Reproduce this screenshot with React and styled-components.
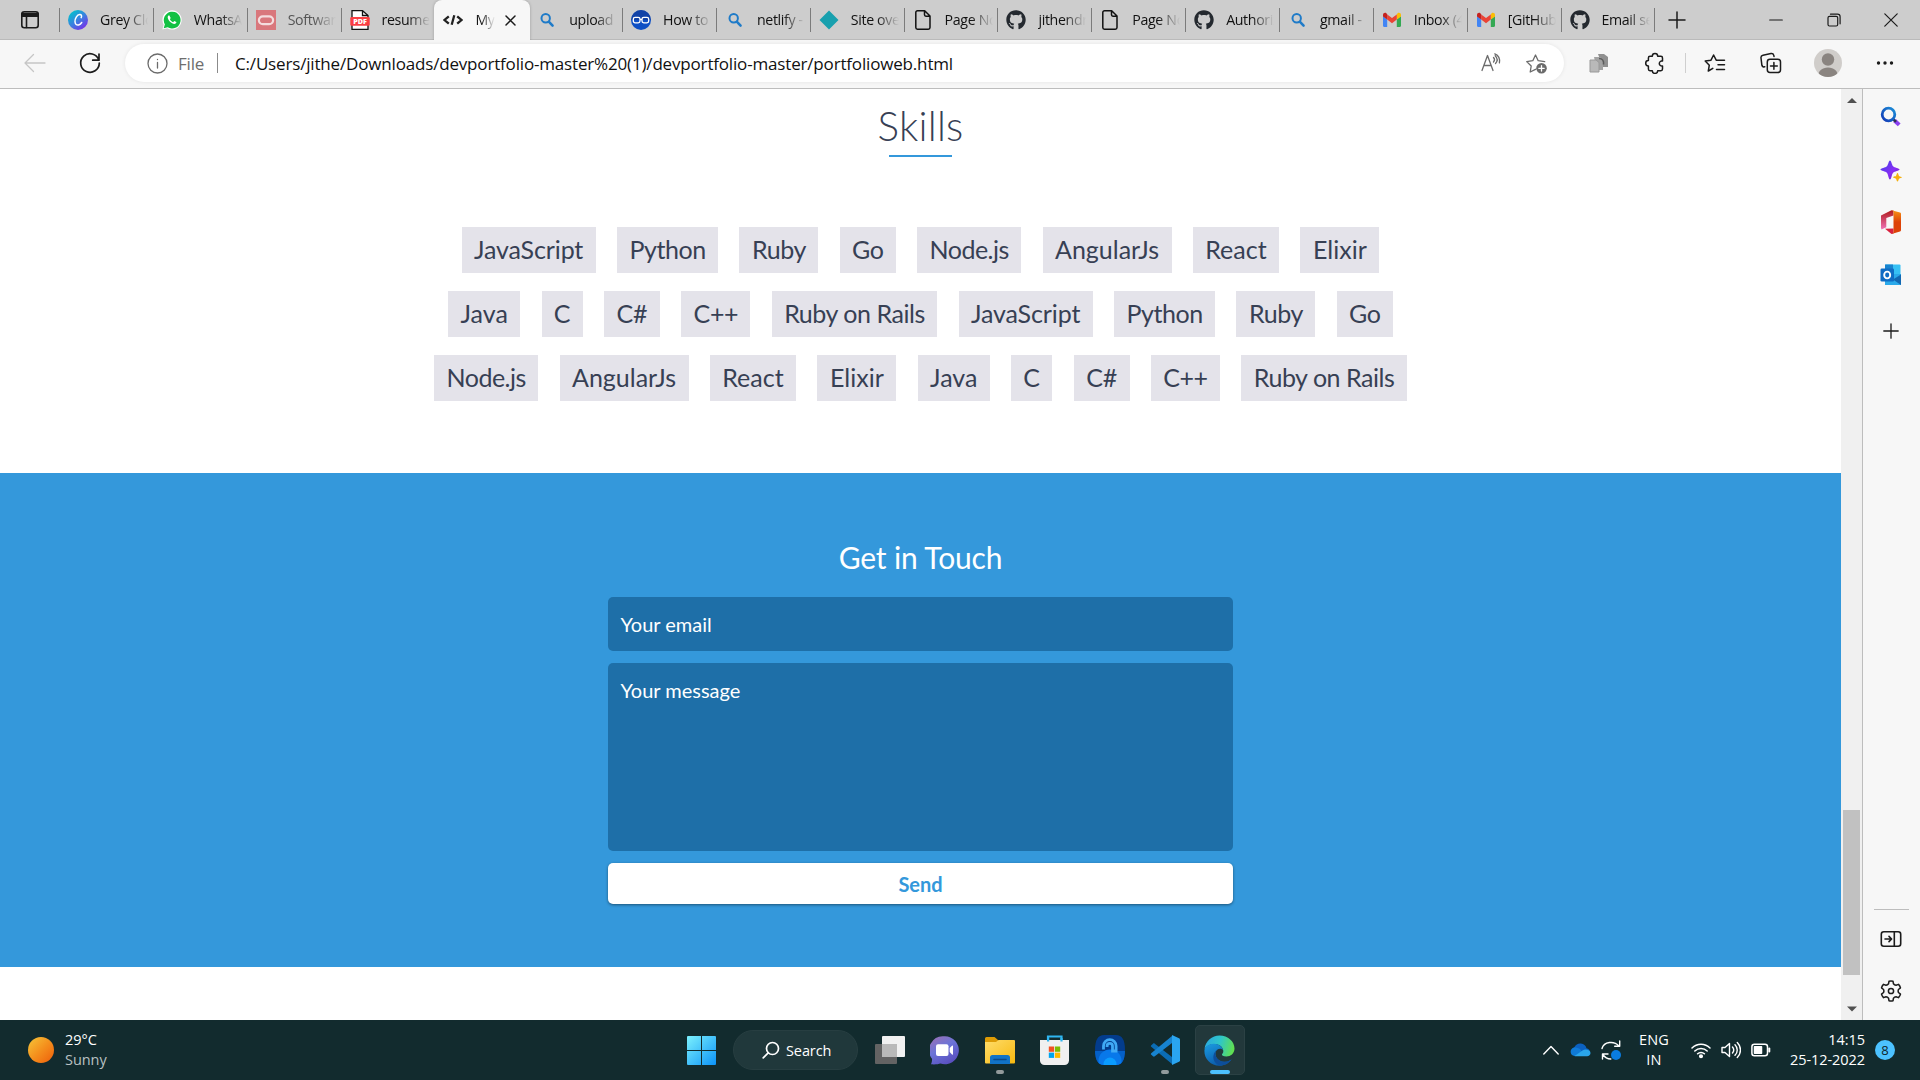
import React from 'react';
import styled, { createGlobalStyle, css } from 'styled-components';
import { FaGithub } from 'react-icons/fa';

const Global = createGlobalStyle`
  * { box-sizing: border-box; }
  body { margin: 0; background: #fff; overflow: hidden; }
  svg { display: block; flex: none; }
`;

const ui = `"Open Sans", "Noto Sans", sans-serif`;

const Screen = styled.div`
  width: 1920px;
  height: 1080px;
  display: flex;
  flex-direction: column;
  overflow: hidden;
  font-family: ${ui};
`;

/* ---------- tab strip ---------- */
const TabStrip = styled.div`
  height: 40px;
  flex: none;
  display: flex;
  background: #cdcdcd;
  box-shadow: inset 0 -1px 0 #bababa;
`;
const Workspace = styled.div`
  width: 59px;
  flex: none;
  padding: 10px 0 0 20px;
`;
const Tab = styled.div`
  width: 93.85px;
  flex: none;
  height: 40px;
  display: flex;
  align-items: center;
  padding-left: 9px;
  position: relative;
  &::before {
    content: '';
    position: absolute;
    left: 0;
    top: 8px;
    width: 1px;
    height: 24px;
    background: ${(p) => (p.$noLine ? 'transparent' : '#7b7b7b')};
  }
  ${(p) =>
    p.$active &&
    css`
      background: #f7f7f7;
      border-radius: 8px 8px 0 0;
      box-shadow: 0 0 3px rgba(0, 0, 0, 0.25);
      clip-path: inset(-4px -4px 0 -4px);
      width: 95.5px;
      margin-right: -1.65px;
    `}
`;
const TabIcon = styled.span`
  width: 20px;
  height: 20px;
  flex: none;
  display: flex;
  align-items: center;
  justify-content: center;
`;
const TabTitle = styled.span`
  margin-left: 12px;
  width: ${(p) => (p.$active ? 20 : 48)}px;
  overflow: hidden;
  white-space: nowrap;
  font-size: 14.2px;
  line-height: 20px;
  letter-spacing: -0.35px;
  color: ${(p) => (p.$dim ? '#555' : '#111')};
  mask-image: linear-gradient(90deg, #000 calc(100% - ${(p) => (p.$active ? 14 : 22)}px), transparent);
`;
const CloseTab = styled.span`
  margin-left: 10px;
`;
const NewTab = styled.div`
  width: 45px;
  display: flex;
  align-items: center;
  justify-content: center;
  border-left: 1px solid transparent;
  position: relative;
  &::before {
    content: '';
    position: absolute;
    left: -1px;
    top: 8px;
    width: 1px;
    height: 24px;
    background: #7b7b7b;
  }
`;
const WindowButtons = styled.div`
  margin-left: auto;
  display: flex;
`;
const WinButton = styled.div`
  width: 57.5px;
  display: flex;
  align-items: center;
  justify-content: center;
`;

/* ---------- toolbar ---------- */
const Toolbar = styled.div`
  height: 49px;
  flex: none;
  display: flex;
  align-items: center;
  background: #f7f7f7;
  padding: 0 0 2px 22px;
  border-bottom: 1px solid #bdbdbd;
`;
const NavButtons = styled.div`
  width: 103px;
  flex: none;
  display: flex;
  gap: 29px;
`;
const Address = styled.div`
  width: 1439px;
  flex: none;
  height: 38px;
  border-radius: 19px;
  background: #fff;
  box-shadow: 0 0 4px rgba(0, 0, 0, 0.08);
  display: flex;
  align-items: center;
  padding: 0 17px 0 22px;
  font-size: 17px;
  white-space: nowrap;
`;
const Scheme = styled.span`
  margin-left: 10px;
  width: 29px;
  color: #6e6e6e;
  letter-spacing: -0.2px;
`;
const SchemeLine = styled.span`
  width: 1px;
  height: 20px;
  background: #8b8b8b;
  margin: 0 17px 0 10px;
`;
const Url = styled.span`
  color: #111;
  letter-spacing: -0.17px;
  flex: 1;
`;
const AddressActions = styled.span`
  display: flex;
  gap: 23px;
`;
const ToolIcons = styled.div`
  flex: 1;
  display: flex;
  align-items: center;
  padding-left: 21px;
`;
const ToolSlot = styled.span`
  width: ${(p) => p.$w}px;
  flex: none;
  display: flex;
  justify-content: center;
`;
const ToolLine = styled.span`
  width: 1px;
  height: 20px;
  background: #cfcfcf;
`;

/* ---------- main area ---------- */
const Main = styled.div`
  height: 931px;
  flex: none;
  display: flex;
`;
const Page = styled.div`
  width: 1841px;
  flex: none;
  background: #fff;
  font-family: Lato, sans-serif;
  display: flex;
  flex-direction: column;
`;
const Skills = styled.section`
  height: 384px;
  display: flex;
  flex-direction: column;
  align-items: center;
`;
const SkillsTitle = styled.h2`
  margin: 12px 0 0;
  font-size: 40.5px;
  line-height: 50px;
  letter-spacing: 0.25px;
  font-weight: 300;
  color: #374054;
`;
const TitleBar = styled.div`
  width: 63px;
  height: 2px;
  margin-top: 4px;
  background: #3498db;
`;
const ChipRows = styled.div`
  margin-top: 70px;
  display: flex;
  flex-direction: column;
  gap: 17.8px;
`;
const ChipRow = styled.div`
  display: flex;
  justify-content: center;
  gap: 21.4px;
`;
const Chip = styled.span`
  width: ${(p) => p.$w}px;
  height: 46.3px;
  background: #e4e3ea;
  color: #374054;
  font-size: 25px;
  line-height: 45px;
  letter-spacing: ${(p) => p.$ls}px;
  text-align: center;
  white-space: nowrap;
`;
const Contact = styled.section`
  height: 494px;
  background: #3498db;
  display: flex;
  flex-direction: column;
  align-items: center;
  padding-top: 64px;
`;
const ContactTitle = styled.h2`
  margin: 0 0 19px;
  font-size: 30px;
  line-height: 41px;
  letter-spacing: -0.15px;
  font-weight: 400;
  color: #fff;
`;
const Field = styled.div`
  width: 625px;
  height: ${(p) => p.$h}px;
  margin-bottom: 12px;
  padding: 14px 12.5px;
  border-radius: 5px;
  background: #1e6fa8;
  color: #fff;
  font-size: 20px;
  line-height: 27px;
`;
const Send = styled.button`
  width: 625px;
  height: 41px;
  border: 0;
  border-radius: 5px;
  background: #fff;
  box-shadow: 0 1px 3px rgba(0, 0, 0, 0.45);
  color: #3498db;
  font: 700 20px/41px Lato, sans-serif;
  padding: 1px 0 0;
`;
const Scrollbar = styled.div`
  width: 22px;
  flex: none;
  background: #f0f0f0;
  border-right: 1px solid #bdbdbd;
  display: flex;
  flex-direction: column;
  align-items: center;
`;
const Thumb = styled.div`
  width: 17px;
  height: 165px;
  margin: 704px 0 31px;
  background: #c1c1c1;
`;
const Sidebar = styled.div`
  flex: 1;
  background: #f7f7f7;
  display: flex;
  flex-direction: column;
  align-items: center;
  padding-right: 1px;
`;
const SideIcon = styled.div`
  height: ${(p) => p.$h || 53}px;
  flex: none;
  display: flex;
  align-items: center;
  justify-content: center;
`;
const SideLine = styled.div`
  width: 35px;
  height: 1px;
  margin-top: auto;
  background: #bdbdbd;
`;
const SideFooter = styled.div`
  height: 110px;
  padding-top: 2px;
`;

/* ---------- taskbar ---------- */
const Taskbar = styled.div`
  height: 60px;
  display: grid;
  grid-template-columns: 674px 1fr 377px;
  background: #122b2e;
  color: #fff;
`;
const Weather = styled.div`
  display: flex;
  align-items: center;
  padding-left: 28px;
  gap: 11px;
`;
const Sun = styled.span`
  width: 26px;
  height: 26px;
  border-radius: 50%;
  background: linear-gradient(135deg, #f5c136 5%, #f4901d 50%, #ee5d0a);
`;
const Lines = styled.div`
  display: flex;
  flex-direction: column;
  text-align: ${(p) => p.$align || 'left'};
  font-size: 14.5px;
  line-height: 20px;
  letter-spacing: ${(p) => p.$ls || -0.05}px;
  white-space: nowrap;
`;
const Muted = styled.span`
  color: #b9c1c2;
`;
const Apps = styled.div`
  display: flex;
  align-items: center;
`;
const AppSlot = styled.div`
  width: 55px;
  height: 60px;
  display: flex;
  align-items: center;
  justify-content: center;
  position: relative;
  &::after {
    content: '';
    position: absolute;
    bottom: 6px;
    height: 4px;
    border-radius: 2px;
    width: ${(p) => (p.$active ? 20 : p.$open ? 8 : 0)}px;
    background: ${(p) => (p.$active ? '#4cc2ff' : '#929b9c')};
  }
`;
const ActiveTile = styled.div`
  width: 50px;
  height: 50px;
  border-radius: 5px;
  display: flex;
  align-items: center;
  justify-content: center;
  background: #22383b;
  border: 1px solid #2b4144;
`;
const SearchPill = styled.div`
  width: 125px;
  height: 40px;
  margin: 0 4px;
  border-radius: 20px;
  background: #20383b;
  border: 1px solid #273e41;
  display: flex;
  align-items: center;
  padding-left: 28px;
  gap: 6px;
  font-size: 14.5px;
  letter-spacing: -0.1px;
`;
const Tray = styled.div`
  display: flex;
  align-items: center;
  padding-right: 25px;
`;
const TraySlot = styled.span`
  width: ${(p) => p.$w}px;
  flex: none;
  display: flex;
  justify-content: center;
`;
const Clock = styled.div`
  margin-left: auto;
`;
const Badge = styled.span`
  width: 20px;
  height: 20px;
  margin-left: 10px;
  border-radius: 50%;
  background: #4cc2ff;
  color: #10262a;
  font-size: 13px;
  line-height: 21px;
  text-align: center;
`;

/* ---------- icons ---------- */
const Line = ({ s = 20, vb = 20, c = '#1b1b1b', w = 1.3, children }) => (
  <svg width={s} height={s} viewBox={`0 0 ${vb} ${vb}`} fill="none" stroke={c} strokeWidth={w} strokeLinecap="round" strokeLinejoin="round">
    {children}
  </svg>
);

const CanvaIcon = () => (
  <svg width="20" height="20" viewBox="0 0 20 20">
    <defs>
      <linearGradient id="cv" x1="0.1" y1="0.1" x2="0.8" y2="1">
        <stop offset="0" stopColor="#00c4cc" />
        <stop offset="0.5" stopColor="#3b7fe0" />
        <stop offset="1" stopColor="#7d2ae8" />
      </linearGradient>
    </defs>
    <circle cx="10" cy="10" r="10" fill="url(#cv)" />
    <path d="M13.200 7.600c.9-1.800.1-3.200-1.500-3-2.700.3-4.900 3.900-4.700 7.100.2 2.600 1.700 3.800 3.600 3.300 1.400-.4 2.400-1.300 3.100-2.500" fill="none" stroke="#fff" strokeWidth="1.500" strokeLinecap="round" />
  </svg>
);
const WhatsIcon = () => (
  <svg width="20" height="20" viewBox="0 0 20 20">
    <path d="M.4 19.600 1.700 14.700A9.600 9.600 0 1 1 5.300 18.300Z" fill="#fff" />
    <path d="M1.700 18.300 2.900 14.300A8.400 8.400 0 1 1 5.700 17.200Z" fill="#12c143" />
    <path d="M7.200 5.300c-.5-.1-1.500.8-1.500 2 0 2.900 4 6.700 6.600 6.700 1.300 0 2.200-1 2.100-1.900l-2.200-1.100-1 1.200c-1.500-.5-2.700-1.700-3.300-3l.8-1.200z" fill="#fff" />
  </svg>
);
const OracleIcon = () => (
  <svg width="20" height="20" viewBox="0 0 20 20">
    <path fill="#d9777c" d="M0 0h20v20H0z" />
    <rect x="2.900" y="6.300" width="14.200" height="7.800" rx="3.900" fill="none" stroke="#f4dcdd" strokeWidth="2.200" />
  </svg>
);
const PdfIcon = () => (
  <svg width="20" height="20" viewBox="0 0 20 20">
    <path d="M2 .7h10.500L18 5.500v13.800H2z" fill="#fff" stroke="#111" strokeWidth="1.300" />
    <path d="M12.500.7v4.800H18" fill="none" stroke="#111" strokeWidth="1.300" />
    <rect x=".3" y="7" width="19.400" height="8.800" rx="1.200" fill="#fa3e42" />
    <text x="10" y="14" textAnchor="middle" fontFamily="Open Sans" fontWeight="800" fontSize="7.200" fill="#fff">PDF</text>
  </svg>
);
const CodeIcon = () => (
  <svg width="20" height="20" viewBox="0 0 20 20" fill="none" stroke="#222" strokeWidth="2.300">
    <path d="M5.800 6.300 1.500 10l4.300 3.700M14.200 6.300 18.500 10l-4.300 3.700M11.300 5.300 8.700 14.700" />
  </svg>
);
const BingSearch = () => (
  <svg width="20" height="20" viewBox="0 0 20 20" fill="none" stroke="#1f7bc8" strokeLinecap="round">
    <circle cx="8.700" cy="8.300" r="4.200" strokeWidth="2" />
    <path d="m12 11.800 3.600 3.900" strokeWidth="2.500" />
  </svg>
);
const HowIcon = () => (
  <svg width="20" height="20" viewBox="0 0 20 20">
    <circle cx="10" cy="10" r="10" fill="#0d4fc4" />
    <path d="M0 10a10 10 0 0 1 20 0z" fill="#143a94" opacity=".6" />
    <rect x="2.300" y="7.400" width="6.700" height="5.400" rx="1.800" fill="none" stroke="#fff" strokeWidth="1.300" />
    <rect x="11" y="7.400" width="6.700" height="5.400" rx="1.800" fill="none" stroke="#fff" strokeWidth="1.300" />
    <path d="M9 9.300h2" stroke="#fff" strokeWidth="1.300" />
  </svg>
);
const NetlifyIcon = () => (
  <svg width="20" height="20" viewBox="0 0 20 20">
    <path d="m10 .5 9.500 9.500-9.500 9.500L.5 10z" fill="#18a0ae" />
  </svg>
);
const PageIcon = () => (
  <Line c="#111" w={1.5}>
    <path d="M4.500.8h7.200L17 6v11.500a1.700 1.700 0 0 1-1.700 1.700H4.500a1.700 1.700 0 0 1-1.700-1.700v-15A1.700 1.700 0 0 1 4.500.8zM11.500 1v3.800c0 .8.600 1.400 1.400 1.400H17" />
  </Line>
);
const GmailIcon = () => (
  <svg width="20" height="20" viewBox="0 0 20 20">
    <path d="M1 6v9.700c0 .7.500 1.200 1.200 1.200h3V9.500z" fill="#4285f4" />
    <path d="M14.800 9.500v7.400h3c.7 0 1.200-.5 1.200-1.200V6z" fill="#34a853" />
    <path d="M14.800 4.400v5.200L19 6.400V5c0-1.900-2-2.800-3.400-1.700z" fill="#fbbc04" />
    <path d="M5.200 9.600V4.400L10 8l4.800-3.600v5.200L10 13.200z" fill="#ea4335" />
    <path d="M1 5v1.400l4.200 3.200V4.400l-.8-1.100C3 2.200 1 3.100 1 5z" fill="#c5221f" />
  </svg>
);
const GitIcon = () => <FaGithub size={20} color="#24292f" />;

const ReadAloud = () => (
  <Line s={22} vb={22} c="#6b6b6b">
    <path d="m2 18.500 5.500-15 5.500 15M4 13.500h7M13.500 5.500c1.200 1.300 1.200 3.200 0 4.500M15.200 3.700c2.300 2.300 2.300 5.500.3 7.800M14.800 1.800c3.500 1.500 5.400 4.600 4.600 9" />
  </Line>
);
const StarAdd = () => (
  <Line s={22} vb={22} c="#6b6b6b">
    <path d="M10.500 17.300 5.200 20l1-6-4.500-4.400 6.100-.9L10.500 3l2.700 5.700 6.500.9" />
    <circle cx="16.500" cy="16.300" r="5.300" fill="#6b6b6b" stroke="none" />
    <path d="M16.500 13.600V19M13.800 16.300h5.400" stroke="#fff" />
  </Line>
);
const PagesIcon = () => (
  <svg width="20" height="20" viewBox="0 0 20 20">
    <path d="M9 1h6l4 3v10h-5z" fill="#909090" />
    <path d="M5 4h6l3 3v10H8z" fill="#a3a3a3" />
    <path d="M10 5.500c3.500 0 5 2.500 4.500 6" fill="none" stroke="#5c5c5c" strokeWidth="1.500" />
    <path d="M1 7h6l3 2.500V19H1z" fill="#b9b9b9" stroke="#999" />
  </svg>
);
const Puzzle = () => (
  <Line s={22} vb={22} w={1.5}>
    <path d="M8.300 4.300a2.700 2.700 0 0 1 5.400 0h3.200a1.600 1.600 0 0 1 1.600 1.600v3.200a2.500 2.500 0 1 0 0 4.800v3.200a1.600 1.600 0 0 1-1.600 1.600h-3.200a2.700 2.700 0 0 1-5.400 0H6a1.600 1.600 0 0 1-1.600-1.600v-3.200a2.700 2.700 0 0 1 0-5.400V5.900A1.600 1.600 0 0 1 6 4.300z" />
  </Line>
);
const Favorites = () => (
  <Line s={22} vb={22} w={1.5}>
    <path d="M8.800 16.300 4.300 19l1-5.800L1.200 9l5.800-.8L9.600 3l2.600 5.200h8.300M14 12.800h6.500M12.500 17.400h8" />
  </Line>
);
const Collections = () => (
  <Line s={22} vb={22} w={1.5}>
    <rect x="7.300" y="7.300" width="13.200" height="13.200" rx="2.700" />
    <path d="M13.900 10.500v6.800M10.500 13.900h6.800M4.800 14.800 3.500 15a2.400 2.400 0 0 1-1.600-1.700L1 6a2.500 2.500 0 0 1 2-2.800l8-1.600a2.500 2.500 0 0 1 2.800 1.800l.2 1" />
  </Line>
);
const Avatar = () => (
  <svg width="28" height="28" viewBox="0 0 28 28">
    <defs>
      <clipPath id="av"><circle cx="14" cy="14" r="14" /></clipPath>
    </defs>
    <g clipPath="url(#av)">
      <path fill="#d0cdca" d="M0 0h28v28H0z" />
      <circle cx="14" cy="10.500" r="6.200" fill="#8a8480" />
      <path d="M4 28c0-6 4-9.500 10-9.500S24 22 24 28z" fill="#8a8480" />
    </g>
  </svg>
);

const BingSide = () => (
  <svg width="22" height="22" viewBox="0 0 22 22" fill="none">
    <defs>
      <linearGradient id="bs" x1="0" y1="1" x2="1" y2="0">
        <stop offset="0" stopColor="#1238b5" />
        <stop offset="1" stopColor="#1c8fd8" />
      </linearGradient>
    </defs>
    <path d="m14.500 14.500 4.700 4.400" stroke="#8a3ff0" strokeWidth="4" />
    <path d="m13 13 3 2.800" stroke="#2b3050" strokeWidth="2.500" />
    <circle cx="8.500" cy="8.500" r="6.300" stroke="url(#bs)" strokeWidth="2.800" />
  </svg>
);
const Sparkle = () => (
  <svg width="22" height="22" viewBox="0 0 22 22">
    <defs>
      <linearGradient id="sp" x1="0" y1="0" x2="1" y2="1">
        <stop offset="0" stopColor="#3e41e8" />
        <stop offset="0.600" stopColor="#8a2ef5" />
        <stop offset="1" stopColor="#5a1ba8" />
      </linearGradient>
    </defs>
    <path d="M10 .5c1.300 0 1.900 4.500 3.100 5.800s6.400 2 6.400 3.200-5.100 1.900-6.400 3.200S11.300 19.500 10 19.500s-1.900-5.500-3.100-6.800S.5 10.700.5 9.500s5.100-1.900 6.400-3.200S8.700.5 10 .5z" fill="url(#sp)" />
    <path d="M17.500 13c.8 0 .9 2.300 1.600 3s2.800.6 2.800 1.300-2.100.700-2.800 1.400-.8 2.800-1.600 2.800-.9-2.100-1.600-2.800-2.800-.6-2.800-1.400 2.100-.6 2.800-1.300.8-3 1.600-3z" fill="#f5b010" />
  </svg>
);
const Office = () => (
  <svg width="22" height="24" viewBox="0 0 22 24">
    <defs>
      <linearGradient id="of1" x1="0" y1="0" x2="0" y2="1"><stop offset="0" stopColor="#b01c1c" /><stop offset="1" stopColor="#f072b8" /></linearGradient>
      <linearGradient id="of2" x1="0" y1="0" x2="0" y2="1"><stop offset="0" stopColor="#f79414" /><stop offset="0.500" stopColor="#dd4208" /></linearGradient>
    </defs>
    <path d="M1 5.500 11.500.3l2 .3v5L6.300 8v9.200L1.500 19.500 1 18z" fill="url(#of1)" />
    <path d="m5 18.800 8.500-.3v5l-2 .4z" fill="#d9213f" />
    <path d="M11.500.3 20 2.500c.8.200 1 .8 1 1.500v16c0 .7-.3 1.200-1 1.400l-8.500 2.500 2-1.500V1.500z" fill="url(#of2)" />
  </svg>
);
const Outlook = () => (
  <svg width="22" height="22" viewBox="0 0 22 22">
    <path d="M5 1.500A1 1 0 0 1 6 .5h13.500a1 1 0 0 1 1 1V12H5z" fill="#36c0f4" />
    <path d="M5 .5h8v5H5z" fill="#1883cf" />
    <path d="M12 10h9v11H5v-5z" fill="#2aa9ea" />
    <path d="m21 10.500-8 5 8 5.500z" fill="#1268b2" />
    <rect x=".5" y="4.500" width="13.500" height="13" rx="1.300" fill="#0f6cc4" />
    <ellipse cx="7.200" cy="11" rx="3" ry="3.400" fill="none" stroke="#fff" strokeWidth="1.900" />
  </svg>
);

const gearPath = () => {
  let d = '';
  for (let i = 0; i < 6; i++) {
    const a = (i * Math.PI) / 3 - Math.PI / 2;
    const P = (r, o) => `${(11 + r * Math.cos(a + o)).toFixed(2)} ${(11 + r * Math.sin(a + o)).toFixed(2)}`;
    d += `${i ? 'L' : 'M'}${P(7.6, -0.33)}L${P(10, -0.2)}Q${P(10.4, 0)} ${P(10, 0.2)}L${P(7.6, 0.33)}Q${P(6.8, 0.52)} ${P(7.6, 0.717)}`;
  }
  return `${d}Z`;
};
const Gear = () => (
  <Line s={22} vb={22} w={1.5}>
    <path d={gearPath()} />
    <circle cx="11" cy="11" r="2.600" />
  </Line>
);

const StartIcon = () => (
  <svg width="29" height="29" viewBox="0 0 29 29">
    <defs>
      <linearGradient id="st" gradientUnits="userSpaceOnUse" x1="0" y1="0" x2="29" y2="29"><stop offset="0" stopColor="#7cf1fd" /><stop offset="1" stopColor="#0c93f8" /></linearGradient>
    </defs>
    <path d="M1 0h13v14H0V1a1 1 0 0 1 1-1zM15 0h13a1 1 0 0 1 1 1v13H15zM0 15h14v14H1a1 1 0 0 1-1-1zM15 15h14v13a1 1 0 0 1-1 1H15z" fill="url(#st)" />
  </svg>
);
const TaskView = () => (
  <svg width="30" height="28" viewBox="0 0 30 28">
    <rect y="8" width="22" height="20" rx="1" fill="#636363" />
    <rect x="7" width="23" height="21" rx="1" fill="#f1f1f1" />
    <path d="M7 8h15v13H7z" fill="#b9b9b9" />
  </svg>
);
const Chat = () => (
  <svg width="29" height="29" viewBox="0 0 29 29">
    <defs>
      <linearGradient id="ch" x1="0" y1="0" x2="0.600" y2="1"><stop offset="0" stopColor="#a06fb0" /><stop offset="0.500" stopColor="#6b74d8" /><stop offset="1" stopColor="#5a50c0" /></linearGradient>
    </defs>
    <path d="M14.500.3a14 14 0 1 1-4 27.300c-2 .8-6.500 1-9.500.7.700-1.500 1.200-3.500 1-5.500A14 14 0 0 1 14.500.3z" fill="url(#ch)" />
    <rect x="6" y="8.300" width="12.500" height="11.700" rx="2" fill="#fff" />
    <path d="m19.700 12 2.300-2.300c.5-.5 1-.2 1 .4v8c0 .6-.5.9-1 .4L19.700 16z" fill="#fff" />
  </svg>
);
const Folder = () => (
  <svg width="30" height="27" viewBox="0 0 30 27">
    <defs>
      <linearGradient id="fo" x1="0" y1="0" x2="1" y2="1"><stop offset="0" stopColor="#ffdc6a" /><stop offset="1" stopColor="#f7b90f" /></linearGradient>
    </defs>
    <path d="M0 6V1.500A1.500 1.500 0 0 1 1.500 0h8L13 3v4H0z" fill="#dd9b05" />
    <path d="M0 5h11l2.500-2H29a1 1 0 0 1 1 1v21.500a1 1 0 0 1-1 1H1a1 1 0 0 1-1-1z" fill="url(#fo)" />
    <path d="M5 27v-6.500A2.500 2.500 0 0 1 7.500 18h15a2.500 2.500 0 0 1 2.500 2.500V27z" fill="#1173c8" />
    <path d="M9 22.500h12" stroke="#0a4a8c" strokeWidth="1.500" strokeLinecap="round" />
  </svg>
);
const Store = () => (
  <svg width="29" height="30" viewBox="0 0 29 30">
    <path d="M8 7V1.500h13.500V7" fill="none" stroke="#2fb6f0" strokeWidth="2.200" />
    <path d="M0 5h29v20.500a4.500 4.500 0 0 1-4.500 4.500h-20A4.500 4.500 0 0 1 0 25.500z" fill="#f0f0f0" />
    <path d="M7 3h2.200v3.500H7zM20.400 3h2.200v3.500h-2.200z" fill="#2fb6f0" />
    <path fill="#f25022" d="M8.800 11.500h5.300v5.300H8.800z" />
    <path fill="#7fba00" d="M14.900 11.500h5.300v5.300h-5.300z" />
    <path fill="#00a4ef" d="M8.800 17.600h5.300v5.300H8.800z" />
    <path fill="#ffb900" d="M14.900 17.600h5.300v5.300h-5.300z" />
  </svg>
);
const LockApp = () => (
  <svg width="30" height="30" viewBox="0 0 30 30">
    <defs><clipPath id="lk"><path d="M9 0h12c6 0 9 5 9 15s-3 15-9 15H9C3 30 0 25 0 15S3 0 9 0z" /></clipPath></defs>
    <g clipPath="url(#lk)">
      <path fill="#033c8c" d="M0 0h30v30H0z" />
      <path d="M0 16h30v14H0z" fill="#0460c8" />
      <circle cx="15" cy="26" r="11.500" fill="#0878ea" />
      <circle cx="15" cy="29" r="6.500" fill="#0a9cff" />
      <path d="M8.500 14.500V11a6.300 6.300 0 0 1 12.600 0v5h-3.600v-5a2.700 2.700 0 0 0-5.400 0v1" fill="none" stroke="#3fa9f5" strokeWidth="2.800" />
    </g>
  </svg>
);
const VsCode = () => (
  <svg width="30" height="30" viewBox="0 0 30 30">
    <path d="M1 10.500 3 8.700c.6-.5 1.200-.5 1.800 0L22 22v7L1.200 11.800c-.5-.4-.5-.900-.2-1.300z" fill="#0b6cb4" />
    <path d="M1 19.500 3 21.300c.6.500 1.200.5 1.800 0L22 8V1L1.200 18.200c-.5.4-.5.900-.2 1.300z" fill="#1783cf" />
    <path d="M22 0v30l7-3.300c.6-.3 1-.8 1-1.500V4.700c0-.7-.4-1.200-1-1.500z" fill="#2aa5f0" />
  </svg>
);
const EdgeIcon = () => (
  <svg width="31" height="31" viewBox="0 0 31 31">
    <defs>
      <linearGradient id="e1" x1="0" y1="0.300" x2="1" y2="0.500"><stop offset="0" stopColor="#2aa8e0" /><stop offset="0.500" stopColor="#2fc6c8" /><stop offset="1" stopColor="#62e04e" /></linearGradient>
      <linearGradient id="e2" x1="0" y1="0" x2="0.500" y2="1"><stop offset="0" stopColor="#1b9de2" /><stop offset="1" stopColor="#0b59a8" /></linearGradient>
    </defs>
    <path d="M.5 14C1.500 6 8 .5 15.500.5 24 .5 30.500 6.500 30.500 13.500c0 5-4 8-8 8-3.500 0-5-1.300-4.500-2.300 1.200-1.200 1.500-2.400 1.200-4C18.500 11 14 8.500 9.500 9 5 9.300 2 11.500.5 14z" fill="url(#e1)" />
    <path d="M.4 15.500C.8 11.500 5 8.500 10 8.700c5 .1 8.500 3 9 6.300-1.500-1.700-4-1.800-5.800-.3-2.700 2.300-2.200 7 1 9.800 4 3.500 9.500 2.700 13.500-.3-3 4.400-7.500 6.500-12.300 6.500C7 30.700 0 24 .4 15.500z" fill="url(#e2)" />
    <path d="M13 14.800c-4 3-5 9-1.500 13 1.500 1.700 3.500 2.700 6 2.700 4-.4 7.500-2.600 10-6-4 2.700-9.500 3.200-13.300 0-3.200-2.800-3.700-7.500-1.200-9.700z" fill="#0d4e9a" />
  </svg>
);
const Cloud = () => (
  <svg width="21" height="14" viewBox="0 0 21 14">
    <path d="M5 12.500A4.500 4.500 0 0 1 4.500 4a6.500 6.500 0 0 1 12 1.200A4 4 0 0 1 17 13z" fill="#0b61c0" />
    <path d="M4.500 13A4.200 4.200 0 0 1 4 4.700c2.500-.8 4 .2 6 1.300l5 7z" fill="#0f7ad6" />
    <path d="m4.500 13 8-5.500c3-2 8-.5 8 2.500 0 2-1.500 3.200-3.500 3.200H5z" fill="#2aa5ea" />
  </svg>
);

const tabs = [
  ['Grey Cloud', CanvaIcon],
  ['WhatsApp', WhatsIcon],
  ['Software', OracleIcon, 'dim'],
  ['resume', PdfIcon],
  ['My P', CodeIcon, 'active'],
  ['upload', BingSearch],
  ['How to', HowIcon],
  ['netlify -', BingSearch],
  ['Site over', NetlifyIcon],
  ['Page No', PageIcon],
  ['jithendr', GitIcon],
  ['Page No', PageIcon],
  ['Authoriz', GitIcon],
  ['gmail -', BingSearch],
  ['Inbox (4', GmailIcon],
  ['[GitHub', GmailIcon],
  ['Email se', GitIcon],
];

/* chip width and tracking per skill */
const chipMetrics = {
  JavaScript: [134, -0.12],
  Python: [101, -0.45],
  Ruby: [79, -0.45],
  Go: [56, -0.4],
  'Node.js': [104, -0.5],
  AngularJs: [129, 0],
  React: [86, 0],
  Elixir: [79, 0],
  Java: [72, 0],
  C: [41, 0],
  'C#': [56, -0.2],
  'C++': [69, -0.4],
  'Ruby on Rails': [165.5, -0.45],
};

const skillRows = [
  ['JavaScript', 'Python', 'Ruby', 'Go', 'Node.js', 'AngularJs', 'React', 'Elixir'],
  ['Java', 'C', 'C#', 'C++', 'Ruby on Rails', 'JavaScript', 'Python', 'Ruby', 'Go'],
  ['Node.js', 'AngularJs', 'React', 'Elixir', 'Java', 'C', 'C#', 'C++', 'Ruby on Rails'],
];

export default function App() {
  return (
    <Screen>
      <Global />
      <TabStrip>
        <Workspace>
          <Line w={1.6}>
            <rect x="1.800" y="1.800" width="16.400" height="16" rx="2.500" />
            <path d="M2 3.500h16v2.800H2z" fill="#1b1b1b" />
            <path d="M6.500 6v11.500" />
          </Line>
        </Workspace>
        {tabs.map(([title, Icon, state], i) => (
          <Tab key={i} $active={state === 'active'} $noLine={i === 4 || i === 5}>
            <TabIcon><Icon /></TabIcon>
            <TabTitle $active={state === 'active'} $dim={state === 'dim'}>{title}</TabTitle>
            {state === 'active' && (
              <CloseTab>
                <Line s={11} vb={11} w={1.5}><path d="m1 1 9 9M10 1l-9 9" /></Line>
              </CloseTab>
            )}
          </Tab>
        ))}
        <NewTab>
          <Line s={18} vb={18} w={1.5}><path d="M9 1v16M1 9h16" /></Line>
        </NewTab>
        <WindowButtons>
          <WinButton><Line s={14} vb={14} w={1.2}><path d="M.7 7h12.600" /></Line></WinButton>
          <WinButton>
            <Line s={14} vb={14} w={1.2}>
              <rect x="1" y="3.300" width="9.700" height="9.700" rx="1.500" />
              <path d="M3.500 1.200h7a2.600 2.600 0 0 1 2.600 2.600v7" />
            </Line>
          </WinButton>
          <WinButton><Line s={14} vb={14} w={1.2}><path d="m.8.8 12.400 12.400M13.200.8.8 13.200" /></Line></WinButton>
        </WindowButtons>
      </TabStrip>

      <Toolbar>
        <NavButtons>
          <Line s={26} vb={26} c="#c6c6c6"><path d="M23 13H3.500M11.500 4.500 3 13l8.500 8.500" /></Line>
          <Line s={26} vb={26} w={1.7}><path d="M21.800 10A9.300 9.300 0 1 0 22.300 13M22 4v6.200h-6.300" /></Line>
        </NavButtons>
        <Address>
          <Line s={21} vb={21} c="#6b6b6b">
            <circle cx="10.500" cy="10.500" r="9.500" />
            <path d="M10.500 9.500v5.500M10.500 6.300v.2" />
          </Line>
          <Scheme>File</Scheme>
          <SchemeLine />
          <Url>C:/Users/jithe/Downloads/devportfolio-master%20(1)/devportfolio-master/portfolioweb.html</Url>
          <AddressActions>
            <ReadAloud />
            <StarAdd />
          </AddressActions>
        </Address>
        <ToolIcons>
          <ToolSlot $w={28}><PagesIcon /></ToolSlot>
          <ToolSlot $w={12} />
          <ToolSlot $w={60}><Puzzle /></ToolSlot>
          <ToolLine />
          <ToolSlot $w={58}><Favorites /></ToolSlot>
          <ToolSlot $w={53}><Collections /></ToolSlot>
          <ToolSlot $w={61}><Avatar /></ToolSlot>
          <ToolSlot $w={54}>
            <svg width="18" height="4" viewBox="0 0 18 4" fill="#1b1b1b"><circle cx="2.500" cy="2" r="1.700" /><circle cx="9" cy="2" r="1.700" /><circle cx="15.500" cy="2" r="1.700" /></svg>
          </ToolSlot>
        </ToolIcons>
      </Toolbar>

      <Main>
        <Page>
          <Skills>
            <SkillsTitle>Skills</SkillsTitle>
            <TitleBar />
            <ChipRows>
              {skillRows.map((row, i) => (
                <ChipRow key={i}>
                  {row.map((s) => (
                    <Chip key={s} $w={chipMetrics[s][0]} $ls={chipMetrics[s][1]}>{s}</Chip>
                  ))}
                </ChipRow>
              ))}
            </ChipRows>
          </Skills>
          <Contact>
            <ContactTitle>Get in Touch</ContactTitle>
            <Field $h={54}>Your email</Field>
            <Field $h={188}>Your message</Field>
            <Send>Send</Send>
          </Contact>
        </Page>
        <Scrollbar>
          <svg width="10" height="17" viewBox="0 0 10 17"><path d="M0 14 5 9l5 5z" fill="#505050" /></svg>
          <Thumb />
          <svg width="10" height="6" viewBox="0 0 10 6"><path d="M0 .5h10l-5 5z" fill="#505050" /></svg>
        </Scrollbar>
        <Sidebar>
          <SideIcon $h={56}><BingSide /></SideIcon>
          <SideIcon $h={51}><Sparkle /></SideIcon>
          <SideIcon $h={52}><Office /></SideIcon>
          <SideIcon><Outlook /></SideIcon>
          <SideIcon $h={60}>
            <Line s={16} vb={16} w={1.3}><path d="M8 .8v14.400M.8 8h14.400" /></Line>
          </SideIcon>
          <SideLine />
          <SideFooter>
            <SideIcon $h={54}>
              <Line s={22} vb={22} w={1.6}>
                <rect x="1.300" y="3.800" width="19.400" height="14.400" rx="2.500" />
                <path d="M14.300 4v14M5 11h6.500M9 8.400l2.600 2.600L9 13.600" />
              </Line>
            </SideIcon>
            <SideIcon $h={50}><Gear /></SideIcon>
          </SideFooter>
        </Sidebar>
      </Main>

      <Taskbar>
        <Weather>
          <Sun />
          <Lines><span>29°C</span><Muted>Sunny</Muted></Lines>
        </Weather>
        <Apps>
          <AppSlot><StartIcon /></AppSlot>
          <SearchPill>
            <Line s={18} vb={18} c="#fff" w={1.7}><circle cx="10.500" cy="7.500" r="6" /><path d="M6.200 11.800 1.200 16.800" /></Line>
            Search
          </SearchPill>
          <AppSlot><TaskView /></AppSlot>
          <AppSlot><Chat /></AppSlot>
          <AppSlot $open><Folder /></AppSlot>
          <AppSlot><Store /></AppSlot>
          <AppSlot><LockApp /></AppSlot>
          <AppSlot $open><VsCode /></AppSlot>
          <AppSlot $active><ActiveTile><EdgeIcon /></ActiveTile></AppSlot>
        </Apps>
        <Tray>
          <TraySlot $w={16}>
            <Line s={16} vb={16} c="#fff" w={1.4}><path d="m.8 12 7.200-7.500L15.200 12" /></Line>
          </TraySlot>
          <TraySlot $w={43}><Cloud /></TraySlot>
          <TraySlot $w={18}>
            <Line s={20} vb={20} c="#fff" w={1.4}>
              <path d="M1 8.500C3 1.500 13 .5 18 6M18.700 1v5.300h-5M1.500 19v-5h5.500M1.800 14.500c2 3 5 4.500 8 4.500" />
              <circle cx="15" cy="15" r="5" fill="#0a7ce0" stroke="none" />
            </Line>
          </TraySlot>
          <TraySlot $w={68}>
            <Lines $align="center" $ls={0.2}><span>ENG</span><span>IN</span></Lines>
          </TraySlot>
          <TraySlot $w={25}>
            <Line s={20} vb={20} c="#fff" w={1.5}>
              <path d="M1 8a12.700 12.700 0 0 1 18 0M3.800 11a8.800 8.800 0 0 1 12.400 0M6.600 13.800a4.800 4.800 0 0 1 6.800 0" />
              <circle cx="10" cy="16.200" r="1.300" fill="#fff" />
            </Line>
          </TraySlot>
          <TraySlot $w={35}>
            <Line s={20} vb={20} c="#fff" w={1.4}>
              <path d="M1 7.500v5h3l4.500 4V3.500L4 7.500zM11.500 7c1.500 1.800 1.500 4.200 0 6M14 4.700c3 3 3 7.600 0 10.600M16.300 2.500c4.200 4.300 4.200 10.700 0 15" />
            </Line>
          </TraySlot>
          <TraySlot $w={25}>
            <Line s={20} vb={20} c="#fff" w={1.5}>
              <rect x=".9" y="4.200" width="15.600" height="11.600" rx="2.500" />
              <path d="M3.500 6.800h7v6.400h-7z" fill="#fff" />
              <path d="M18.300 8.500v3" strokeWidth="2" />
            </Line>
          </TraySlot>
          <Clock><Lines $align="right" $ls={-0.06}><span>14:15</span><span>25-12-2022</span></Lines></Clock>
          <Badge>8</Badge>
        </Tray>
      </Taskbar>
    </Screen>
  );
}
